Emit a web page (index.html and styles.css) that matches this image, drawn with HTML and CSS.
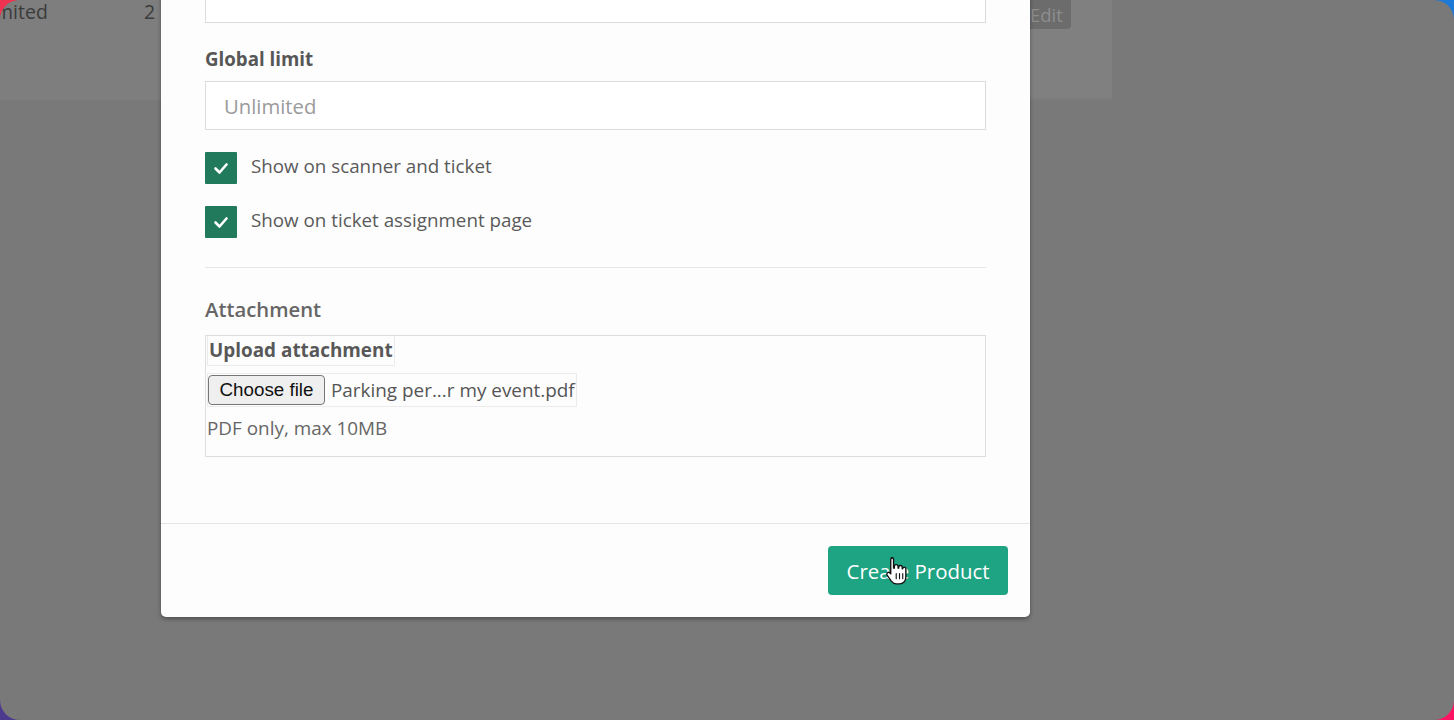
FILE: index.html
```html
<!DOCTYPE html>
<html lang="en">
<head>
<meta charset="utf-8">
<title>Create Product</title>
<link rel="stylesheet" href="styles.css">
</head>
<body>
<div class="screen">
  <div class="page">
    <div class="row">
      <span class="cell-limit">Unlimited</span>
      <span class="cell-count">2</span>
      <div class="cell-actions"><span class="edit-btn">Edit</span></div>
    </div>
  </div>

  <div class="modal">
    <div class="modal-body">
      <label class="label">Price</label>
      <input class="input" type="text" value="">

      <label class="label label-gap">Global limit</label>
      <input class="input" type="text" placeholder="Unlimited">

      <div class="check-row first">
        <span class="check"><svg viewBox="0 0 32 32" width="32" height="32"><path d="M10.5 16.5l4 4 7-8" fill="none" stroke="#fff" stroke-width="2.6" stroke-linecap="round" stroke-linejoin="round"/></svg></span>
        <span class="check-text">Show on scanner and ticket</span>
      </div>
      <div class="check-row">
        <span class="check"><svg viewBox="0 0 32 32" width="32" height="32"><path d="M10.5 16.5l4 4 7-8" fill="none" stroke="#fff" stroke-width="2.6" stroke-linecap="round" stroke-linejoin="round"/></svg></span>
        <span class="check-text">Show on ticket assignment page</span>
      </div>

      <div class="divider"></div>

      <div class="section-title">Attachment</div>
      <div class="upload-box">
        <div class="upload-legend">Upload attachment</div>
        <div class="file-input">
          <button class="file-btn" type="button">Choose file</button>
          <span class="file-name">Parking per...r my event.pdf</span>
        </div>
        <div class="hint">PDF only, max 10MB</div>
      </div>
    </div>
    <div class="modal-footer">
      <button class="primary" type="button">Create Product</button>
    </div>
  </div>

  <svg class="cursor" viewBox="0 0 24 30" width="25" height="31">
    <path d="M8 1.5c1.2 0 2.1.9 2.1 2.1v8.2h.8v-1.6c0-1 .8-1.8 1.8-1.8s1.8.8 1.8 1.8v1.6h.6v-.9c0-1 .8-1.7 1.7-1.7s1.7.7 1.7 1.7v1.4h.5c0-.9.7-1.5 1.5-1.5s1.5.7 1.5 1.5v8.3c0 3.6-2.6 6.4-6.1 6.4h-3c-2.3 0-3.6-1-4.9-2.7l-4-5.6c-.6-.8-.5-1.9.3-2.5.8-.6 1.9-.5 2.5.3l.6.8V3.6c0-1.2.9-2.1 2.1-2.1z" fill="#fff" stroke="#111" stroke-width="1.3" stroke-linejoin="round"/>
    <path d="M12.7 17v5M15.9 17v5M19 17v5" stroke="#111" stroke-width="1.1" stroke-linecap="round"/>
  </svg>
</div>
</body>
</html>
```

FILE: styles.css
```css
* { box-sizing: border-box; }

html, body {
  margin: 0;
  width: 1454px;
  height: 720px;
  overflow: hidden;
}

body {
  background:
    linear-gradient(to right, #ee3350 0 50%, #1d7ad6 50% 100%) top / 100% 50% no-repeat,
    linear-gradient(to right, #4b3a8e 0 50%, #ff1463 50% 100%) bottom / 100% 50% no-repeat;
  font-family: "Open Sans", "Noto Sans", sans-serif;
}

.screen {
  position: relative;
  width: 1454px;
  height: 720px;
  border-radius: 20px;
  overflow: hidden;
  background: #797979;
}

/* dimmed page behind the dialog */
.page {
  width: 100%;
  height: 100%;
}

.row {
  display: flex;
  align-items: flex-start;
  width: 1112px;
  height: 100px;
  background: #7e7e7e;
}

.cell-limit {
  margin-left: -41px;
  width: 185px;
  font-size: 19.5px;
  color: #3b3b3b;
  line-height: 24px;
}

.cell-count {
  font-size: 19.5px;
  color: #3b3b3b;
  line-height: 24px;
}

.cell-actions {
  margin-left: auto;
  width: 82px;
  height: 99px;
  background: #808080;
  border-bottom: 1px solid #7b7b7b;
}

.edit-btn {
  display: inline-block;
  margin-left: -3px;
  background: #6c6c6c;
  color: #8d8d8d;
  font-size: 18.5px;
  line-height: 29px;
  padding: 0 8px 0 3px;
  border-radius: 0 0 4px 4px;
}

/* dialog */
.modal {
  position: absolute;
  left: 161px;
  bottom: 103px;
  width: 869px;
  background: #fdfdfd;
  border-radius: 0 0 5px 5px;
  box-shadow: 0 2px 4px rgba(0, 0, 0, 0.35);
}

.modal-body {
  display: flex;
  flex-direction: column;
  align-items: flex-start;
  padding: 20px 44px 66px;
}

.label {
  font-size: 18.7px;
  font-weight: 700;
  color: #575757;
  line-height: 24px;
  margin-bottom: 10px;
}

.label-gap { margin-top: 24px; }

.input {
  width: 100%;
  height: 49px;
  border: 1px solid #dcdcdc;
  background: #fff;
  font-family: "Open Sans", "Noto Sans", sans-serif;
  font-size: 20.3px;
  color: #555;
  padding: 0 18px;
  outline: none;
}

.input::placeholder { color: #9a9a9a; }

.check-row {
  display: flex;
  align-items: center;
  gap: 14px;
  margin-top: 22px;
}

.check-row.first { margin-top: 22px; }

.check {
  width: 32px;
  height: 32px;
  background: #217a5b;
  border-radius: 1px;
  display: flex;
}

.check-text {
  font-size: 18.8px;
  color: #5a5a5a;
  line-height: 24px;
  margin-top: -4px;
}

.divider {
  width: 100%;
  height: 1px;
  background: #e6e6e6;
  margin-top: 29px;
}

.section-title {
  margin-top: 27px;
  font-size: 20.3px;
  font-weight: 600;
  color: #666;
  line-height: 28px;
  margin-bottom: 12px;
}

.upload-box {
  width: 100%;
  height: 122px;
  border: 1px solid #dedede;
  padding: 0 0 0 1px;
  display: flex;
  flex-direction: column;
  align-items: flex-start;
}

.upload-legend {
  font-size: 18.9px;
  font-weight: 700;
  color: #585858;
  line-height: 29px;
  padding: 0 1px 0 1px;
  border: 1px solid #ebebeb;
  border-top: none;
}

.file-input {
  margin-top: 7px;
  display: flex;
  align-items: center;
  gap: 6px;
  border: 1px solid #ececec;
  padding: 1px 1px 1px 0;
}

.file-btn {
  height: 30px;
  width: 117px;
  font-family: "Liberation Sans", Arial, sans-serif;
  font-size: 18.8px;
  color: #111;
  background: #efefef;
  border: 1px solid #767676;
  border-radius: 4px;
  padding: 0;
}

.file-name {
  font-size: 18.9px;
  color: #555;
  line-height: 30px;
}

.hint {
  margin-top: 7px;
  font-size: 18.9px;
  color: #666;
  line-height: 28px;
  padding-left: 0;
}

.modal-footer {
  border-top: 1px solid #e4e4e4;
  padding: 22px 22px 22px;
  display: flex;
  justify-content: flex-end;
}

.primary {
  height: 49px;
  width: 180px;
  background: #1ea383;
  color: #fff;
  border: none;
  border-radius: 4px;
  font-family: "Open Sans", "Noto Sans", sans-serif;
  font-size: 20.4px;
  padding: 0;
}

.cursor {
  position: absolute;
  left: 883px;
  top: 556px;
}
```
